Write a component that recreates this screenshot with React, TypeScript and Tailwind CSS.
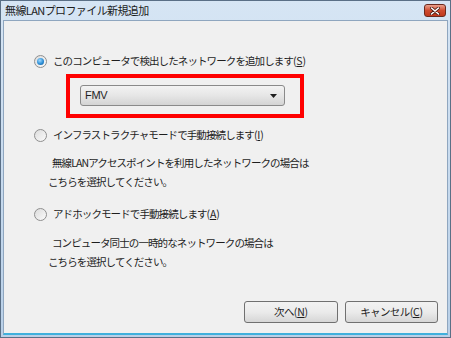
import React from 'react';

const FONT = { fontFamily: '"Noto Sans CJK JP", "Noto Sans", sans-serif' };

// Vista-style radio button
const Radio = ({ checked }: { checked?: boolean }) => (
  <span className="relative flex h-[13px] w-[13px] items-center justify-center rounded-full border border-[#8f8f8f] bg-gradient-to-br from-[#dcdcdc] to-[#fbfbfb]">
    {checked && (
      <span className="h-[7px] w-[7px] rounded-full bg-[radial-gradient(circle_at_40%_35%,#9fd8ff_0%,#2d8fd6_55%,#0b4f8f_100%)]" />
    )}
  </span>
);

const Hotkey = ({ hot }: { hot: string }) => (
  <span className="tracking-[-0.2px]">
    (<span className="underline">{hot}</span>)
  </span>
);

const RadioRow = ({ label, hot, checked }: { label: string; hot: string; checked?: boolean }) => (
  <div className="flex h-4 items-center">
    <div className="flex w-[20px] justify-center pl-[1px]">
      <Radio checked={checked} />
    </div>
    <span className="ml-[3px] text-[10.5px] leading-4 tracking-[-0.9px] text-[#1e1e1e]">
      {label}
      <Hotkey hot={hot} />
    </span>
  </div>
);

const DialogButton = ({ label, hot, width }: { label: string; hot: string; width: string }) => (
  <button className={`${width} flex h-[22px] items-center justify-center rounded-[3px] border border-[#707070] bg-gradient-to-b from-[#f2f2f2] via-[#ebebeb] to-[#d6d6d6] text-[10.5px] tracking-[-0.6px] text-[#1e1e1e]`}>
    {label}
    <Hotkey hot={hot} />
  </button>
);

export default function App() {
  return (
    <div className="h-[338px] w-[451px] overflow-hidden bg-[#9bbad8]" style={FONT}>
      <div className="flex h-full flex-col border border-[#5a6f86] bg-gradient-to-b from-[#d6e5f4] to-[#b9d0e8]">
        {/* title bar */}
        <div className="flex h-[19px] shrink-0 items-center justify-between pl-[4px] pr-[4px]">
          <span className="text-[11px] leading-none tracking-[-0.6px] text-[#1b1b1b]">無線LANプロファイル新規追加</span>
          <div className="flex h-[13px] w-[22px] items-center justify-center rounded-[3px] border border-[#6b2a1e] bg-gradient-to-b from-[#e9a08d] via-[#cf4b2f] to-[#c0391c]">
            <svg width="10" height="8" viewBox="0 0 10 8">
              <path d="M1.5 1 L8.5 7 M8.5 1 L1.5 7" stroke="#4a1a10" strokeWidth="3" strokeLinecap="round" />
              <path d="M1.5 1 L8.5 7 M8.5 1 L1.5 7" stroke="#ffffff" strokeWidth="1.6" strokeLinecap="round" />
            </svg>
          </div>
        </div>

        {/* client area */}
        <div className="mx-[2px] mb-[2px] flex flex-1 flex-col border border-[#8fa6bf] border-b-[#3fb0dc] border-b-2 bg-[#f0f0f0] pl-[26px] text-[#1e1e1e]">
          <div className="mt-[32px]">
            <RadioRow label="このコンピュータで検出したネットワークを追加します" hot="S" checked />
          </div>

          <div className="ml-[36px] mt-[5px] h-[44px] w-[238px] border-4 border-[#ff0000] pl-[10px] pt-[7px]">
            <div className="flex h-[21px] w-[205px] items-center justify-between rounded-[3px] border border-[#8a8a8a] bg-gradient-to-b from-[#f3f3f3] via-[#e6e6e6] to-[#d4d4d4] pl-[4px] pr-[7px]">
              <span className="text-[11px] tracking-[-0.3px] text-[#1e1e1e]" style={{ fontFamily: '"Liberation Sans", sans-serif' }}>FMV</span>
              <svg width="7" height="4" viewBox="0 0 7 4">
                <path d="M0 0 H7 L3.5 4 Z" fill="#1e1e1e" />
              </svg>
            </div>
          </div>

          <div className="mt-[9px]">
            <RadioRow label="インフラストラクチャモードで手動接続します" hot="I" />
          </div>
          <div className="mt-[10px] text-[10.5px] leading-[19px] tracking-[-0.9px]">
            <p className="pl-[22px]">無線LANアクセスポイントを利用したネットワークの場合は</p>
            <p className="pl-[18px]">こちらを選択してください。</p>
          </div>

          <div className="mt-[15px]">
            <RadioRow label="アドホックモードで手動接続します" hot="A" />
          </div>
          <div className="mt-[11px] text-[10.5px] leading-[19px] tracking-[-0.9px]">
            <p className="pl-[22px]">コンピュータ同士の一時的なネットワークの場合は</p>
            <p className="pl-[18px]">こちらを選択してください。</p>
          </div>

          <div className="mt-auto mb-[10px] flex justify-end gap-[7px] pr-[9px]">
            <DialogButton label="次へ" hot="N" width="w-[94px]" />
            <DialogButton label="キャンセル" hot="C" width="w-[93px]" />
          </div>
        </div>
      </div>
    </div>
  );
}
